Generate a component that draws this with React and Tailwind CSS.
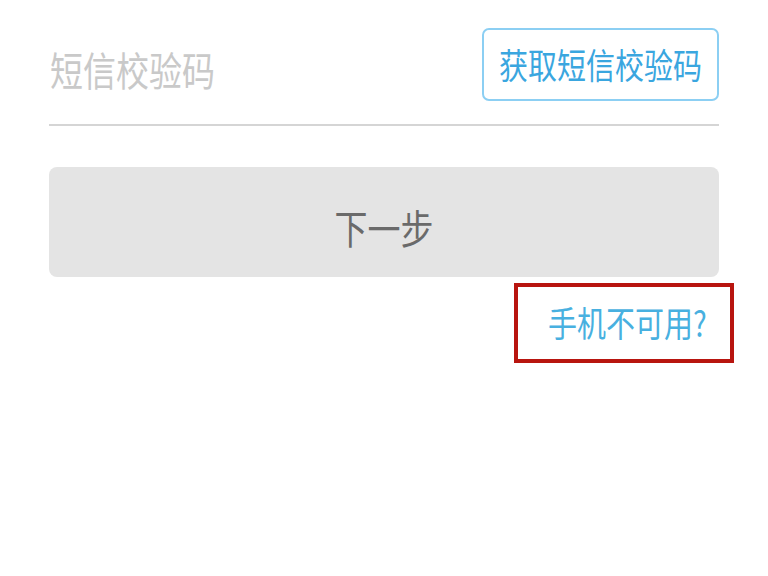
export default function App() {
  const font = { fontFamily: '"Noto Sans CJK SC", "Noto Sans", sans-serif' };
  return (
    <div className="w-[768px] h-[576px] bg-white px-[49px] pt-[28px]" style={font}>
      <div className="flex justify-between items-start">
        <div className="mt-[25px] text-[33px] leading-none text-[#c9c9c9] ml-[1px]">
          <span className="inline-block scale-y-[1.2]">短信校验码</span>
        </div>
        <div className="h-[73px] w-[237px] border-2 border-[#8ccff3] rounded-[7px] flex items-center justify-center text-[29px] text-[#3aa6df]">
          <span className="inline-block scale-y-[1.2]">获取短信校验码</span>
        </div>
      </div>
      <div className="mt-[23px] h-[2px] bg-[#d5d5d5]" />
      <div className="mt-[41px] h-[110px] rounded-[8px] bg-[#e4e4e4] flex items-center justify-center pt-[12px] text-[33px] text-[#6a6a6a]">
        <span className="inline-block scale-y-[1.2]">下一步</span>
      </div>
      <div className="flex justify-end mr-[-15px] mt-[6px]">
        <div className="w-[220px] h-[80px] border-4 border-[#b8150f] flex items-center pl-[30px] text-[29px] text-[#48b0e0]">
          <span className="inline-block scale-y-[1.2]">手机不可用?</span>
        </div>
      </div>
    </div>
  );
}
